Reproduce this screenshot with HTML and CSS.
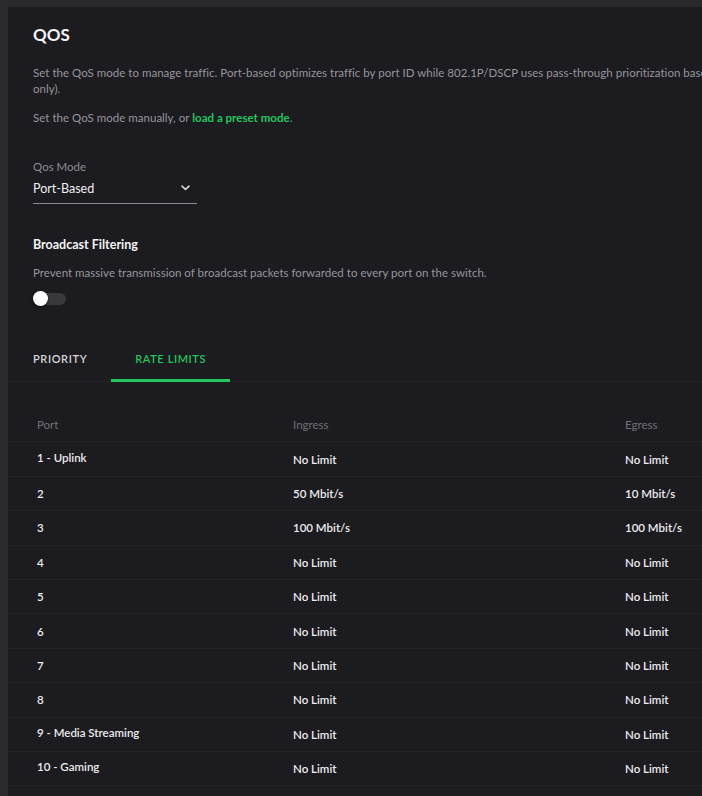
FILE: index.html
```html
<!DOCTYPE html>
<html lang="en">
<head>
<meta charset="utf-8">
<title>QOS</title>
<link rel="stylesheet" href="styles.css">
</head>
<body>
<main class="card">
  <section class="intro">
    <h1 class="title">QOS</h1>
    <p class="desc">Set the QoS mode to manage traffic. Port-based optimizes traffic by port ID while 802.1P/DSCP uses pass-through prioritization based on packet tags (Layer 2 and Layer 3 traffic<br>only).</p>
    <p class="desc desc-2">Set the QoS mode manually, or <a class="link" href="#">load a preset mode</a>.</p>

    <div class="field">
      <div class="field-label">Qos Mode</div>
      <div class="select">
        <span>Port-Based</span>
        <svg class="chevron" width="9" height="6" viewBox="0 0 9 6"><path d="M1 1.2 L4.5 4.4 L8 1.2" fill="none" stroke="#d8d8dc" stroke-width="1.6" stroke-linecap="round" stroke-linejoin="round"/></svg>
      </div>
    </div>

    <h2 class="subtitle">Broadcast Filtering</h2>
    <p class="desc desc-3">Prevent massive transmission of broadcast packets forwarded to every port on the switch.</p>
    <div class="toggle"><span class="track"></span><span class="knob"></span></div>
  </section>

  <nav class="tabs">
    <div class="tab">PRIORITY</div>
    <div class="tab active">RATE LIMITS</div>
  </nav>

  <section class="table">
    <div class="row head"><div>Port</div><div>Ingress</div><div>Egress</div></div>
    <div class="row"><div class="port named">1 - Uplink</div><div>No Limit</div><div>No Limit</div></div>
    <div class="row"><div class="port">2</div><div>50 Mbit/s</div><div>10 Mbit/s</div></div>
    <div class="row"><div class="port">3</div><div>100 Mbit/s</div><div>100 Mbit/s</div></div>
    <div class="row"><div class="port">4</div><div>No Limit</div><div>No Limit</div></div>
    <div class="row"><div class="port">5</div><div>No Limit</div><div>No Limit</div></div>
    <div class="row"><div class="port">6</div><div>No Limit</div><div>No Limit</div></div>
    <div class="row"><div class="port">7</div><div>No Limit</div><div>No Limit</div></div>
    <div class="row"><div class="port">8</div><div>No Limit</div><div>No Limit</div></div>
    <div class="row"><div class="port named">9 - Media Streaming</div><div>No Limit</div><div>No Limit</div></div>
    <div class="row"><div class="port named">10 - Gaming</div><div>No Limit</div><div>No Limit</div></div>
  </section>
</main>
</body>
</html>
```

FILE: styles.css
```css
html, body {
  margin: 0;
  padding: 0;
  background: #2a292d;
  overflow: hidden;
  height: 100%;
}

body {
  font-family: Lato, "Open Sans", sans-serif;
  color: #e9e9ec;
  padding: 7px 0 0 8px;
}

.card {
  width: 1300px;
  min-height: 900px;
  background: #1c1b20;
  border-top-left-radius: 3px;
}

.intro {
  padding: 17px 0 0 25px;
}

.title {
  margin: 0;
  font-size: 17px;
  line-height: 22px;
  font-weight: 700;
  color: #f4f4f6;
  letter-spacing: 0;
}

.desc {
  margin: 19px 0 0;
  font-size: 11.5px;
  line-height: 16px;
  color: #96969c;
  letter-spacing: 0.02px;
}

.desc-2 { margin-top: 13px; }
.desc-3 { margin-top: 12px; }

.link {
  color: #22c55e;
  font-weight: 700;
  text-decoration: none;
}

.field {
  margin-top: 33px;
  width: 164px;
}

.field-label {
  font-size: 11.5px;
  line-height: 16px;
  color: #8c8c92;
}

.select {
  margin-top: 5px;
  display: flex;
  align-items: center;
  justify-content: space-between;
  font-size: 12.5px;
  line-height: 18px;
  color: #f0f0f2;
  padding: 0 7px 5px 0;
  border-bottom: 1px solid #8a8a90;
}

.chevron { margin-top: -3px; }

.subtitle {
  margin: 33px 0 0;
  font-size: 12.5px;
  line-height: 16px;
  font-weight: 700;
  color: #f4f4f6;
}

.toggle {
  margin-top: 10px;
  position: relative;
  width: 33px;
  height: 16px;
}

.track {
  position: absolute;
  left: 3px;
  top: 2px;
  width: 30px;
  height: 12px;
  border-radius: 6px;
  background: #39383d;
}

.knob {
  position: absolute;
  left: 0;
  top: 0;
  width: 15px;
  height: 15px;
  border-radius: 50%;
  background: #ffffff;
  box-shadow: 0 1px 3px rgba(0, 0, 0, 0.5);
}

.tabs {
  margin-top: 28px;
  display: flex;
  border-bottom: 1px solid #242328;
}

.tab {
  height: 46px;
  padding: 0 24px 0 25px;
  display: flex;
  align-items: center;
  font-size: 11px;
  font-weight: 600;
  letter-spacing: 0.6px;
  color: #d6d6da;
  box-sizing: border-box;
}

.tab.active {
  padding: 0 24px;
  color: #22c55e;
  border-bottom: 3px solid #22c55e;
  margin-bottom: -1px;
  height: 47px;
  padding-top: 3px;
}

.table {
  padding-top: 26px;
}

.row {
  display: grid;
  grid-template-columns: 256px 332px 1fr;
  padding-left: 29px;
  height: 34.4px;
  box-sizing: border-box;
  align-items: center;
  border-bottom: 1px solid #242328;
  font-size: 11.5px;
  font-weight: 600;
  color: #ececef;
}

.row.head {
  font-weight: 400;
  color: #707076;
}

.port.named {
  padding-bottom: 4px;
}
```
